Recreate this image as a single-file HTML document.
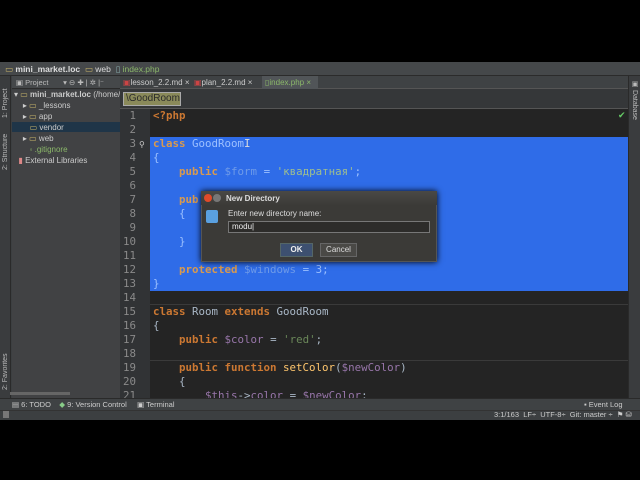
<!DOCTYPE html>
<html><head><meta charset="utf-8"><style>
*{margin:0;padding:0;box-sizing:border-box}
body{width:640px;height:480px;background:#000;position:relative;overflow:hidden;font-family:"Liberation Sans","DejaVu Sans",sans-serif;font-size:8px;color:#bbb}
.a{position:absolute}
.code{font-family:"DejaVu Sans Mono","Liberation Mono",monospace;font-size:10.8px;white-space:pre;line-height:14px;color:#a9b7c6}
.k{color:#cc7832;font-weight:bold}
.v{color:#9876aa}
.s{color:#6a8759}
.n{font-family:"DejaVu Sans Mono",monospace;font-size:10.8px;color:#8a8a8a;width:24px;text-align:right;line-height:14px}
.sel .k{color:#d89a50}.sel .v{color:#6f9be8}.sel .s{color:#9fbf8f}.sel{color:#9cc0ff}
</style></head><body>
<div class="a" style="left:0;top:62px;width:640px;height:358px;background:#3c3f41"></div>
<div class="a" style="left:0;top:62px;width:640px;height:14px;background:#45484a;border-bottom:1px solid #2b2b2b"></div>
<div class="a" style="left:5px;top:64px;color:#ddd;font-size:8.5px;font-weight:bold"><span style="color:#c9b56a">▭</span> mini_market.loc &nbsp;<span style="color:#c9b56a;font-weight:normal">▭</span><span style="font-weight:normal"> web</span> &nbsp;<span style="color:#8aa;font-weight:normal">▯</span><span style="font-weight:normal;color:#8bb86a"> index.php</span></div>
<div class="a" style="left:0;top:76px;width:11px;height:322px;background:#3a3c3e;border-right:1px solid #2a2a2a"></div>
<div class="a" style="left:2px;top:78px;writing-mode:vertical-rl;transform:rotate(180deg);font-size:7px;color:#bbb;height:40px">1: Project</div>
<div class="a" style="left:2px;top:128px;writing-mode:vertical-rl;transform:rotate(180deg);font-size:7px;color:#bbb;height:42px">2: Structure</div>
<div class="a" style="left:2px;top:350px;writing-mode:vertical-rl;transform:rotate(180deg);font-size:7px;color:#bbb;height:40px">2: Favorites</div>
<div class="a" style="left:12px;top:76px;width:108px;height:13px;background:#45484a;border-bottom:1px solid #2b2b2b"></div>
<div class="a" style="left:16px;top:78px;font-size:7.5px;color:#bbb">▣ Project &nbsp; &nbsp; &nbsp; ▾ ⊖ ✚ | ✲ |⁻</div>
<div class="a" style="left:12px;top:90px;width:108px;height:308px;background:#414244"></div>
<div class="a" style="left:12px;top:122px;width:108px;height:10px;background:#1f3548"></div>
<div class="a" style="left:14px;top:89px;font-size:8px;line-height:11px;color:#ccc;white-space:pre">▾ <span style="color:#c9b56a">▭</span> <b>mini_market.loc</b> (/home/
    ▸ <span style="color:#c9b56a">▭</span> _lessons
    ▸ <span style="color:#c9b56a">▭</span> app
       <span style="color:#c9b56a">▭</span> vendor
    ▸ <span style="color:#c9b56a">▭</span> web
       <span style="color:#8bb86a">◦ .gitignore</span>
  <span style="color:#d88">▮</span> External Libraries</div>
<div class="a" style="left:10px;top:392px;width:60px;height:3px;background:#666"></div>
<div class="a" style="left:120px;top:76px;width:508px;height:13px;background:#3f4244;border-bottom:1px solid #555"></div>
<div class="a" style="left:123px;top:78px;font-size:8px;color:#ccc;white-space:pre"><span style="color:#c44">▣</span>lesson_2.2.md ×  <span style="color:#c44">▣</span>plan_2.2.md ×</div>
<div class="a" style="left:262px;top:76px;width:56px;height:13px;background:#515558"></div>
<div class="a" style="left:265px;top:78px;font-size:8px;color:#8bb86a">▯index.php ×</div>
<div class="a" style="left:120px;top:89px;width:508px;height:20px;background:#353739;border-bottom:1px solid #555"></div>
<div class="a" style="left:123px;top:92px;width:58px;height:14px;background:#8a8a5a;border:1px solid #aaa;font-size:10px;color:#2b2b2b;padding-left:2px;line-height:12px">\GoodRoom</div>
<div class="a" style="left:120px;top:109px;width:30px;height:289px;background:#313335"></div>
<div class="a" style="left:150px;top:109px;width:478px;height:289px;background:#242424"></div>
<div class="a" style="left:150px;top:137px;width:478px;height:154px;background:#2f6ce8"></div>
<div class="a" style="left:150px;top:304px;width:478px;height:1px;background:#3a3a3a"></div>
<div class="a" style="left:150px;top:360px;width:478px;height:1px;background:#3a3a3a"></div>
<div class="a" style="left:618px;top:110px;width:10px;height:10px;color:#6c6;font-size:9px">✔</div>
<div class="a n" style="left:112px;top:109px">1<br>2<br>3<br>4<br>5<br>6<br>7<br>8<br>9<br>10<br>11<br>12<br>13<br>14<br>15<br>16<br>17<br>18<br>19<br>20<br>21</div>
<div class="a" style="left:139px;top:140px;color:#ccc;font-size:8px">⚲</div>
<div class="a code" style="left:153px;top:109px;width:470px;height:289px;overflow:hidden"><span class="k">&lt;?php</span>

<span class="sel"><span class="k">class</span> GoodRoom<span style="color:#ddd">I</span>
{
    <span class="k">public</span> <span class="v">$form</span> = <span class="s">'квадратная'</span>;

    <span class="k">pub</span>
    {

    }

    <span class="k">protected</span> <span class="v">$windows</span> = 3;
}</span>

<span class="k">class</span> Room <span class="k">extends</span> GoodRoom
{
    <span class="k">public</span> <span class="v">$color</span> = <span class="s">'red'</span>;

    <span class="k">public function</span> <span style="color:#ffc66d">setColor</span>(<span class="v">$newColor</span>)
    {
        <span class="v">$this</span>-&gt;<span class="v">color</span> = <span class="v">$newColor</span>;</div>
<div class="a" style="left:628px;top:76px;width:12px;height:322px;background:#3a3c3e;border-left:1px solid #2a2a2a"></div>
<div class="a" style="left:630px;top:80px;writing-mode:vertical-rl;font-size:7px;color:#bbb">▣ Database</div>
<div class="a" style="left:201px;top:191px;width:236px;height:71px;background:#3b3a37;border:1px solid #555;box-shadow:0 0 6px #000"></div>
<div class="a" style="left:201px;top:191px;width:236px;height:14px;background:linear-gradient(#4a4945,#3c3b38)"></div>
<div class="a" style="left:204px;top:194px;width:8px;height:8px;border-radius:4px;background:#e04a2a"></div>
<div class="a" style="left:213px;top:194px;width:8px;height:8px;border-radius:4px;background:#777"></div>
<div class="a" style="left:226px;top:194px;font-size:8px;font-weight:bold;color:#ddd">New Directory</div>
<div class="a" style="left:206px;top:210px;width:12px;height:13px;background:#5aa0e0;border-radius:2px"></div>
<div class="a" style="left:228px;top:209px;font-size:8px;color:#ddd">Enter new directory name:</div>
<div class="a" style="left:228px;top:221px;width:202px;height:12px;background:#2d2c2a;border:1px solid #777;font-size:8px;color:#eee;padding-left:3px;line-height:10px">modu|</div>
<div class="a" style="left:280px;top:243px;width:33px;height:14px;background:#3d5070;border:1px solid #566;font-size:8px;color:#eee;text-align:center;line-height:12px;font-weight:bold">OK</div>
<div class="a" style="left:320px;top:243px;width:37px;height:14px;background:#4a4946;border:1px solid #666;font-size:8px;color:#ddd;text-align:center;line-height:12px">Cancel</div>
<div class="a" style="left:0;top:398px;width:640px;height:12px;background:#3f4244;border-top:1px solid #2a2a2a"></div>
<div class="a" style="left:12px;top:400px;font-size:7.5px;color:#ccc;white-space:pre">▤ 6: TODO    <span style="color:#8c8">◆</span> 9: Version Control     ▣ Terminal</div>
<div class="a" style="left:584px;top:400px;font-size:7.5px;color:#ccc">▪ Event Log</div>
<div class="a" style="left:0;top:410px;width:640px;height:10px;background:#3c3f41;border-top:1px solid #333"></div>
<div class="a" style="left:494px;top:410px;font-size:7.5px;color:#ccc;white-space:pre">3:1/163  LF÷  UTF-8÷  Git: master ÷  ⚑ ⛁</div>
<div class="a" style="left:3px;top:411px;width:6px;height:7px;background:#777"></div>
</body></html>
